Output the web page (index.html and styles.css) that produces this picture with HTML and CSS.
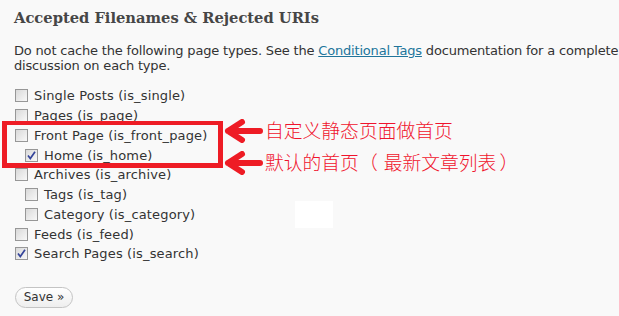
FILE: index.html
```html
<!DOCTYPE html>
<html>
<head>
<meta charset="utf-8">
<link rel="stylesheet" href="styles.css">
</head>
<body>
<div class="page">
  <h3 class="title">Accepted Filenames &amp; Rejected URIs</h3>
  <p class="intro">Do not cache the following page types. See the <a href="#">Conditional Tags</a> documentation for a complete<br>discussion on each type.</p>
  <ul class="opts">
    <li class="row"><span class="cb"></span><span>Single Posts (is_single)</span></li>
    <li class="row"><span class="cb"></span><span>Pages (is_page)</span></li>
    <li class="row"><span class="cb"></span><span>Front Page (is_front_page)</span></li>
    <li class="row sub"><span class="cb on"><svg viewBox="0 0 11 11" width="11" height="11"><path d="M2 5.5 L4.3 8.5 L9 1.8" fill="none" stroke="#34449a" stroke-width="1.7"/></svg></span><span>Home (is_home)</span></li>
    <li class="row"><span class="cb"></span><span>Archives (is_archive)</span></li>
    <li class="row sub"><span class="cb"></span><span>Tags (is_tag)</span></li>
    <li class="row sub"><span class="cb"></span><span>Category (is_category)</span></li>
    <li class="row"><span class="cb"></span><span>Feeds (is_feed)</span></li>
    <li class="row"><span class="cb on"><svg viewBox="0 0 11 11" width="11" height="11"><path d="M2 5.5 L4.3 8.5 L9 1.8" fill="none" stroke="#34449a" stroke-width="1.7"/></svg></span><span>Search Pages (is_search)</span></li>
  </ul>
  <div class="actions"><button class="save">Save &raquo;</button></div>
</div>

<div class="redbox"></div>
<svg class="arrow a1" width="40" height="24" viewBox="0 0 40 24"><path d="M36 12 H4 M18 3 L4 12 L18 21" fill="none" stroke="#ee1c25" stroke-width="6" stroke-linecap="round" stroke-linejoin="round"/></svg>
<svg class="arrow a2" width="40" height="24" viewBox="0 0 40 24"><path d="M36 12 H4 M18 3 L4 12 L18 21" fill="none" stroke="#ee1c25" stroke-width="6" stroke-linecap="round" stroke-linejoin="round"/></svg>
<div class="note n1">自定义静态页面做首页</div>
<div class="note n2">默认的首页<span class="paren-l">（</span>最新文章列表<span class="paren-r">）</span></div>
<div class="patch"></div>
</body>
</html>
```
FILE: styles.css
```css
html, body {
  margin: 0;
  padding: 0;
  background: #f9f9f9;
}
body {
  position: relative;
  width: 619px;
  height: 316px;
  overflow: hidden;
}
.page {
  padding: 0 14px;
  font-family: "DejaVu Sans", Verdana, sans-serif;
  font-size: 13px;
  color: #333;
}
.title {
  margin: 0;
  padding-top: 8px;
  font-family: "DejaVu Serif", Georgia, serif;
  font-size: 14.7px;
  line-height: 20px;
  font-weight: bold;
  color: #464646;
}
.intro {
  margin: 15px 0 0;
  line-height: 15px;
  white-space: nowrap;
  letter-spacing: -0.18px;
}
.intro a {
  color: #21759b;
}
.opts {
  list-style: none;
  margin: 13px 0 0;
  padding: 0;
  letter-spacing: 0.15px;
}
.row {
  display: flex;
  align-items: center;
  gap: 6px;
  height: 19.75px;
  padding-left: 1px;
}
.row.sub {
  padding-left: 11px;
}
.cb {
  box-sizing: border-box;
  width: 13px;
  height: 13px;
  border: 1px solid #979797;
  background: linear-gradient(135deg, #d9d9d9, #f8f8f8);
  display: flex;
  align-items: center;
  justify-content: center;
  flex: none;
}
.actions {
  margin-top: 23px;
}
.save {
  font-family: "DejaVu Sans", Verdana, sans-serif;
  font-size: 12px;
  color: #333;
  height: 21px;
  width: 58px;
  padding: 0;
  border: 1px solid #c4c4c4;
  border-radius: 11px;
  background: linear-gradient(#ffffff, #eeeeee);
  margin-left: 1px;
}
.redbox {
  position: absolute;
  left: 2px;
  top: 121px;
  width: 211px;
  height: 38px;
  border: 5px solid #ee1c25;
  border-top-width: 4px;
}
.arrow {
  position: absolute;
  left: 224px;
}
.a1 { top: 119px; }
.a2 { top: 151px; }
.note {
  position: absolute;
  left: 265px;
  font-family: "Noto Sans CJK SC", sans-serif;
  font-weight: 300;
  font-size: 18.8px;
  line-height: 22px;
  color: #f0142d;
}
.paren-l {
  margin-right: 6px;
}
.paren-r {
  margin-left: 3px;
}
.n1 { top: 119px; }
.n2 { top: 151px; }
.patch {
  position: absolute;
  left: 295px;
  top: 201px;
  width: 38px;
  height: 27px;
  background: #fff;
}
```
